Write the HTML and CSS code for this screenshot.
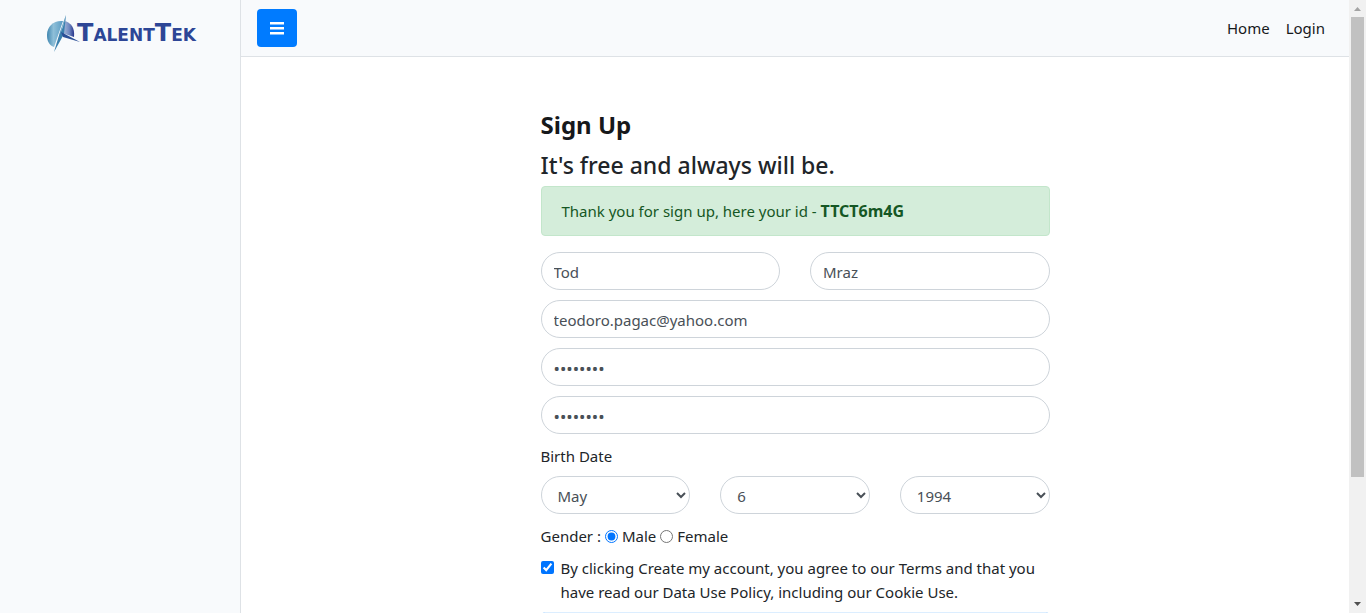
FILE: index.html
```html
<!DOCTYPE html>
<html lang="en">
<head>
<meta charset="utf-8">
<title>TalentTek - Sign Up</title>
<link rel="stylesheet" href="styles.css">
</head>
<body>
<div class="shell">
  <aside class="sidebar">
    <a class="logo" href="#" aria-label="TalentTek">
      <svg class="logo-mark" viewBox="0 0 34 38" width="34" height="38" aria-hidden="true">
        <defs>
          <linearGradient id="disc-left" x1="0" y1="0" x2="1" y2="0">
            <stop offset="0" stop-color="#3f86b0"/>
            <stop offset="0.4" stop-color="#8fbfd8"/>
            <stop offset="1" stop-color="#5a9cc4"/>
          </linearGradient>
          <linearGradient id="disc-right" x1="0" y1="0" x2="1" y2="0">
            <stop offset="0" stop-color="#b4c4df"/>
            <stop offset="0.6" stop-color="#6f88c0"/>
            <stop offset="1" stop-color="#27348b"/>
          </linearGradient>
        </defs>
        <path d="M17 6C8 5 1 11 1 20c0 6 2 10 7 12L17 6z" fill="url(#disc-left)"/>
        <path d="M18 6c7 1 11 7 10 16l-12-4z" fill="url(#disc-right)"/>
        <path d="M20 0l-2 19-10 18 6-20z" fill="#3a80ae"/>
        <path d="M20 0l-3 12-3 7z" fill="#a9cfe0"/>
        <path d="M15 17l19 10-17-5z" fill="#2b4f97"/>
      </svg>
      <span class="logo-text"><span class="logo-cap">T</span>ALENT<span class="logo-cap">T</span>EK</span>
    </a>
  </aside>
  <div class="page">
    <header class="topbar">
      <button class="menu-button" type="button" aria-label="Toggle menu">
        <svg viewBox="0 0 14 14" width="14" height="14" aria-hidden="true"><path d="M0 1h14v2.500H0zM0 6h14v2.500H0zM0 11h14v2.500H0z" fill="#fff"/></svg>
      </button>
      <nav class="nav">
        <a href="#">Home</a>
        <a href="#">Login</a>
      </nav>
    </header>
    <main class="content">
      <form class="signup">
        <h1 class="title">Sign Up</h1>
        <h2 class="subtitle">It's free and always will be.</h2>
        <div class="alert" role="alert">Thank you for sign up, here your id - <strong>TTCT6m4G</strong></div>
        <div class="fields">
          <div class="row">
            <input class="control" type="text" aria-label="First name" value="Tod">
            <input class="control" type="text" aria-label="Last name" value="Mraz">
          </div>
          <input class="control" type="email" aria-label="Email" value="teodoro.pagac@yahoo.com">
          <input class="control password" type="password" aria-label="Password" value="password">
          <input class="control password" type="password" aria-label="Confirm password" value="password">
        </div>
        <label class="birth-label" for="month">Birth Date</label>
        <div class="row">
          <select class="control" id="month" aria-label="Birth month"><option>May</option></select>
          <select class="control" aria-label="Birth day"><option>6</option></select>
          <select class="control" aria-label="Birth year"><option>1994</option></select>
        </div>
        <div class="gender">
          <span>Gender :</span>
          <input class="radio" type="radio" name="gender" id="male" checked>
          <label for="male">Male</label>
          <input class="radio" type="radio" name="gender" id="female">
          <label for="female">Female</label>
        </div>
        <div class="terms">
          <input class="check" type="checkbox" id="terms" checked>
          <label for="terms">By clicking Create my account, you agree to our Terms and that you have read our Data Use Policy, including our Cookie Use.</label>
        </div>
        <button class="submit" type="submit" aria-label="Create my account"></button>
      </form>
    </main>
  </div>
  <div class="scrollbar" aria-hidden="true">
    <svg viewBox="0 0 17 17" width="17" height="17"><path d="M5 11h7L8.500 7z" fill="#a3a3a3"/></svg>
    <div class="track"><div class="thumb"></div></div>
    <svg viewBox="0 0 17 17" width="17" height="17"><path d="M5 6h7l-3.500 4z" fill="#505050"/></svg>
  </div>
</div>
</body>
</html>
```
FILE: styles.css
```css
* { box-sizing: border-box; }

body {
  margin: 0;
  font-family: "Noto Sans", "Open Sans", sans-serif;
  font-size: 15px;
  line-height: 24px;
  color: #212529;
  background: #fff;
}

.shell {
  display: flex;
  height: 100vh;
  overflow: hidden;
}

.sidebar {
  flex: 0 0 241px;
  padding: 15px 0 0 46px;
  background: #f8fafc;
  border-right: 1px solid #dee2e6;
}

.logo {
  display: flex;
  align-items: center;
  text-decoration: none;
}

.logo-mark { flex: none; margin-right: -3px; }

.logo-text {
  font-family: "DejaVu Sans", sans-serif;
  font-size: 17px;
  font-weight: 700;
  color: #2d4696;
}

.logo-cap { font-size: 24px; }

.page {
  flex: 1;
  min-width: 0;
}

.topbar {
  display: flex;
  align-items: center;
  justify-content: space-between;
  padding: 9px 24px 9px 16px;
  background: #f8fafc;
  border-bottom: 1px solid #dee2e6;
}

.menu-button {
  display: flex;
  align-items: center;
  justify-content: center;
  width: 40px;
  height: 38px;
  padding: 0;
  border: 0;
  border-radius: 4px;
  background: #007bff;
}

.nav {
  display: flex;
  gap: 16px;
}

.nav a {
  color: #16181b;
  text-decoration: none;
}

.content { padding: 52px 15px 0; }

.signup {
  width: 50%;
  margin: 0 auto;
  padding: 0 15px;
}

.title, .subtitle {
  margin: 0;
  line-height: 32px;
}

.title {
  margin-bottom: 8px;
  font-size: 24px;
  font-weight: 700;
  color: #16181b;
}

.subtitle {
  margin-bottom: 5px;
  font-size: 23px;
  font-weight: 500;
}

.alert {
  margin-bottom: 16px;
  padding: 12px 20px;
  border: 1px solid #c3e6cb;
  border-radius: 4px;
  color: #155724;
  background: #d4edda;
}

.alert strong { font-size: 16px; }

.fields {
  display: flex;
  flex-direction: column;
  gap: 10px;
}

.row {
  display: flex;
  gap: 30px;
}

.control {
  width: 100%;
  min-width: 0;
  height: 38px;
  padding: 7px 12px 5px;
  border: 1px solid #ced4da;
  border-radius: 20px;
  font: inherit;
  color: #495057;
  background: #fff;
}

.password { font-size: 17px; }

.birth-label {
  display: block;
  margin: 10px 0 8px;
}

.gender {
  display: flex;
  align-items: center;
  gap: 4px;
  margin: 10px 0 8px;
}

.radio, .check {
  flex: none;
  width: 13px;
  height: 13px;
  margin: 0;
  accent-color: #0075ff;
}

.terms {
  display: flex;
  gap: 7px;
  margin-bottom: 8px;
}

.check { margin-top: 5px; }

.submit {
  display: block;
  width: 100%;
  height: 38px;
  border: 1px solid #dceeff;
  border-radius: 4px;
  background: #007bff;
}

.scrollbar {
  display: flex;
  flex-direction: column;
  flex: 0 0 17px;
  background: #f1f1f1;
}

.track {
  flex: 1;
  padding: 0 2px;
}

.thumb {
  height: 79.500%;
  background: #c1c1c1;
}
```
